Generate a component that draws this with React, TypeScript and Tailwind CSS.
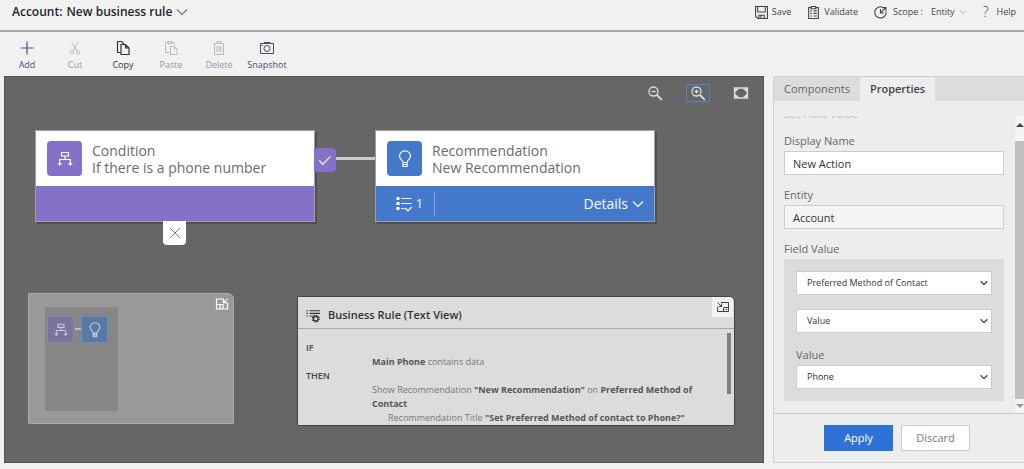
import { useState } from 'react';
import type { ReactNode } from 'react';
import clsx from 'clsx';

/* ---------- icons ---------- */

type IconProps = { className?: string };

function Svg({
  className,
  box = 16,
  stroke = 1,
  children,
}: IconProps & { box?: number; stroke?: number; children: ReactNode }) {
  return (
    <svg
      viewBox={`0 0 ${box} ${box}`}
      fill="none"
      stroke="currentColor"
      strokeWidth={stroke}
      className={clsx('shrink-0', className)}
      aria-hidden="true"
    >
      {children}
    </svg>
  );
}

const ChevronIcon = ({ className }: IconProps) => (
  <Svg className={className} box={12} stroke={1.2}>
    <path d="M1 3.5 6 8.5 11 3.5" />
  </Svg>
);

const SaveIcon = ({ className }: IconProps) => (
  <Svg className={className} box={12}>
    <path d="M.5.5h11v11h-9l-2-2z" />
    <path d="M2.5.5v5h7v-5M3.5 11.5v-3h5v3M5.5 9v2.5" />
  </Svg>
);

const ValidateIcon = ({ className }: IconProps) => (
  <Svg className={className} box={12}>
    <path d="M4 1.5H1.5v10h9v-10H8M4 2.5h4v-2H4z" />
    <path d="M3 4.5h1.5M6 4.5h3M3 6.8h1.5M6 6.8h3M3 9.2h1.5M6 9.2h3" />
  </Svg>
);

const ScopeIcon = ({ className }: IconProps) => (
  <Svg className={className} box={12}>
    <path d="M8 1.2A5.2 5.2 0 1 0 11 5M6 2.8v3.7h3M6.2 6.3l4.500-4.800M8 1.500h3v3" />
  </Svg>
);

const AddIcon = ({ className }: IconProps) => (
  <Svg className={className} stroke={1.2}>
    <path d="M8 1.500v13M1.500 8h13" />
  </Svg>
);

const CutIcon = ({ className }: IconProps) => (
  <Svg className={className}>
    <path d="M4.500 2 10 11M11.500 2 6 11" />
    <circle cx="4.800" cy="12.500" r="1.700" />
    <circle cx="11.200" cy="12.500" r="1.700" />
  </Svg>
);

const CopyIcon = ({ className }: IconProps) => (
  <Svg className={className} stroke={1.2}>
    <path d="M5.500 12.500h-3v-11h4l2.500 2.500" />
    <path d="M6 4.500h4.500l3.500 3.500v6.500H6zM10.500 4.500V8H14" />
  </Svg>
);

const PasteIcon = ({ className }: IconProps) => (
  <Svg className={className}>
    <path d="M6.500 12.500h-4v-10H5M8.500 2.500H11V5M5 3.500h4v-2H5z" />
    <path d="M7.500 6.500h4l2.500 2.500v5.500H7.500zM11.500 6.500V9H14" />
  </Svg>
);

const DeleteIcon = ({ className }: IconProps) => (
  <Svg className={className}>
    <path d="M2.500 3.500h11M6 3.500v-2h4v2M3.500 3.500v11h9v-11M6 6v6M8 6v6M10 6v6" />
  </Svg>
);

const SnapshotIcon = ({ className }: IconProps) => (
  <Svg className={className}>
    <path d="M1.500 3.500h13v10h-13z" />
    <path d="M5 3.500v-1h6v1M2.500 5.500h1.500" />
    <circle cx="8" cy="8.500" r="3" />
  </Svg>
);

const ZoomIcon = ({ className, plus }: IconProps & { plus?: boolean }) => (
  <Svg className={className} stroke={1.3}>
    <circle cx="6.500" cy="6.500" r="4.500" />
    <path d="M4.500 6.500h4" />
    {plus && <path d="M6.500 4.500v4" />}
    <path d="m9.800 9.800 5 5" strokeWidth="1.800" />
  </Svg>
);

const FitIcon = ({ className }: IconProps) => (
  <Svg className={className} stroke={1.3}>
    <path d="M1.500 3h13v10h-13z" />
    <path
      d="M2 3.500h4.500L3.500 6 2 7.500zM14 3.500H9.500L12.500 6 14 7.500zM2 12.500h4.500L3.500 10 2 8.500zM14 12.500H9.500L12.500 10 14 8.500z"
      fill="currentColor"
      stroke="none"
    />
  </Svg>
);

const ConditionIcon = ({ className }: IconProps) => (
  <Svg className={className} stroke={1.2}>
    <path d="M4.500 1.500h7v3.500h-7zM8 5v3.500M2.700 13V8.500h10.600V13" />
    <path d="M.2 12h5l-2.500 3zM10.800 12h5l-2.500 3z" fill="currentColor" stroke="none" />
  </Svg>
);

const BulbIcon = ({ className }: IconProps) => (
  <Svg className={className} box={18} stroke={1.2}>
    <path d="M7 12.500c0-2-3.500-3.500-3.500-6.500a5.500 5.200 0 0 1 11 0c0 3-3.500 4.500-3.500 6.500zM7 12.500v4h4v-4M7 14.500h4" />
  </Svg>
);

const ChecklistIcon = ({ className }: IconProps) => (
  <Svg className={className} stroke={1.2}>
    <path d="M5 2.500H15.500M5 7.500H15.500M5 12.500H8.500" />
    <path d="M.5 1h3v3h-3zM.5 6h3v3h-3zM.5 11h3v3h-3z" fill="currentColor" stroke="none" />
    <path d="m9 12 3 2.800 3.800-4" />
  </Svg>
);

const CheckIcon = ({ className }: IconProps) => (
  <Svg className={className} stroke={1.3}>
    <path d="m1.500 8.500 4 4.500 9-9.500" />
  </Svg>
);

const CloseIcon = ({ className }: IconProps) => (
  <Svg className={className} box={12}>
    <path d="m1 1 10 10M11 1 1 11" />
  </Svg>
);

const CollapseIcon = ({ className }: IconProps) => (
  <Svg className={className} box={14} stroke={1.2}>
    <path d="M9 2H1.500v10h11V5.500M1.500 7.500H8V12M5 7.500V12" />
    <path d="m12.500 2-4 3.500M8.500 2.500v3.200H12" />
  </Svg>
);

const PopOutIcon = ({ className }: IconProps) => (
  <Svg className={className} box={14}>
    <path d="M5 2.500h7.500v9h-11V7M7.500 11.500v-4h5M9.500 9.500h1.500" />
    <path d="m1.500 2.500 4 4M5.500 3.500v3h-3" />
  </Svg>
);

const RuleTextIcon = ({ className }: IconProps) => (
  <Svg className={className} stroke={1.3}>
    <path d="M4 2h12M4 5h12M4 8h4M.5 2H2.200M.5 5H2.200M.5 8H2.200" />
    <circle cx="11.200" cy="11" r="2.700" strokeWidth="1.600" />
    <circle cx="11.200" cy="11" r="4" strokeDasharray="1.500 1.640" />
  </Svg>
);

/* ---------- header and toolbar ---------- */

function Header() {
  return (
    <header className="flex h-8 items-center justify-between border-b-2 border-[#a6a6a6] pb-1.5 pl-3 pr-2">
      <button type="button" className="flex items-center gap-1 text-xs font-semibold text-[#262626]">
        <span>Account:</span>
        <span>New business rule</span>
        <ChevronIcon className="size-3 text-[#777]" />
      </button>
      <nav className="flex items-center gap-4 text-[9px] text-[#444]">
        <button type="button" className="flex items-center gap-1">
          <SaveIcon className="size-[13px]" />
          Save
        </button>
        <button type="button" className="flex items-center gap-1">
          <ValidateIcon className="size-[13px]" />
          Validate
        </button>
        <button type="button" className="flex items-center">
          <ScopeIcon className="size-[13px]" />
          <span className="ml-1.5">Scope :</span>
          <span className="ml-2">Entity</span>
          <ChevronIcon className="ml-1 size-2 text-[#999]" />
        </button>
        <button type="button" className="flex items-center gap-2">
          <span className="text-sm font-light leading-4">?</span>
          Help
        </button>
      </nav>
    </header>
  );
}

const TOOLS = [
  { label: 'Add', Icon: AddIcon, tone: 'text-[#44527a]' },
  { label: 'Cut', Icon: CutIcon, tone: 'text-[#8e97a8]', disabled: true },
  { label: 'Copy', Icon: CopyIcon, tone: 'text-[#333]' },
  { label: 'Paste', Icon: PasteIcon, tone: 'text-[#8e97a8]', disabled: true },
  { label: 'Delete', Icon: DeleteIcon, tone: 'text-[#8e97a8]', disabled: true },
  { label: 'Snapshot', Icon: SnapshotIcon, tone: 'text-[#47506a]' },
];

function Toolbar() {
  return (
    <div className="flex h-11 px-[3px] pt-2">
      {TOOLS.map(({ label, Icon, tone, disabled }) => (
        <button
          key={label}
          type="button"
          disabled={disabled}
          className={clsx('flex w-12 flex-col items-center gap-[3px] text-[9px] leading-3', tone)}
        >
          <Icon className={clsx('size-4', disabled && 'text-[#bbb]')} />
          {label}
        </button>
      ))}
    </div>
  );
}

/* ---------- canvas ---------- */

type NodeCardProps = {
  icon: ReactNode;
  kind: string;
  name: string;
  color: string;
  className?: string;
  children?: ReactNode;
};

function NodeCard({ icon, kind, name, color, className, children }: NodeCardProps) {
  return (
    <article
      className={clsx(
        'absolute w-[280px] border border-[#a0a0a0] shadow-[2px_2px_0_#505050]',
        className,
      )}
    >
      <div className="flex h-[55px] items-center gap-2.5 bg-white px-[11px]">
        <span className={clsx('grid size-[35px] place-items-center rounded text-white', color)}>{icon}</span>
        <div className="text-sm leading-[17px] text-[#6b6b6b]">
          <h2>{kind}</h2>
          <p>{name}</p>
        </div>
      </div>
      <div className={clsx('flex h-[35px] items-center text-white', color)}>{children}</div>
    </article>
  );
}

function CanvasTools() {
  return (
    <div className="flex justify-end gap-[19px] px-2.5 pt-[7px] text-[#ddd]">
      <button type="button" aria-label="Zoom out" className="grid h-[18px] w-6 place-items-center">
        <ZoomIcon className="size-4" />
      </button>
      <button
        type="button"
        aria-label="Zoom in"
        className="grid h-[18px] w-6 place-items-center border border-[#4a86c8]"
      >
        <ZoomIcon className="size-4" plus />
      </button>
      <button type="button" aria-label="Fit to canvas" className="grid h-[18px] w-6 place-items-center">
        <FitIcon className="size-4" />
      </button>
    </div>
  );
}

function MiniMap() {
  return (
    <aside
      aria-label="Mini map"
      className="absolute left-[23px] top-[216px] flex h-[131px] w-[206px] items-start justify-between rounded-tr-md border border-[#ababab] bg-[#999] pl-4 pr-1 pt-[3px]"
    >
      <div className="mt-2.5 flex h-[104px] w-[73px] items-start bg-[#868686] pl-0.5 pt-[9px]">
        <span className="grid size-[27px] place-items-center border border-[#8f86ab] bg-[#7c72a0] text-[#c9c5d6]">
          <ConditionIcon className="size-[14px]" />
        </span>
        <span className="mt-3 h-0.5 w-[7px] border-l border-[#868686] bg-[#bbb]" />
        <span className="grid size-[27px] place-items-center border border-[#6f8db5] bg-[#5878a5] text-[#c9d3e0]">
          <BulbIcon className="size-4" />
        </span>
      </div>
      <button type="button" aria-label="Collapse mini map" className="text-white">
        <CollapseIcon className="size-[14px]" />
      </button>
    </aside>
  );
}

function TextView() {
  return (
    <section className="absolute left-[292px] top-[219px] flex h-[130px] w-[438px] flex-col overflow-hidden rounded-tr-md border border-[#444] bg-[#dcdcdc]">
      <header className="flex h-8 shrink-0 items-start justify-between border-b border-[#aaa] pl-2 pr-px">
        <div className="flex h-full items-center gap-2 pt-1.5 text-[#333]">
          <RuleTextIcon className="size-[14px]" />
          <h2 className="text-[11px] font-semibold">Business Rule (Text View)</h2>
        </div>
        <button
          type="button"
          aria-label="Collapse text view"
          className="grid h-5 w-[21px] place-items-center bg-[#f2f2f2] text-[#444]"
        >
          <PopOutIcon className="size-[14px]" />
        </button>
      </header>
      <div className="flex min-h-0 flex-1 justify-between pl-2 pr-[3px] pt-1">
        <div className="min-w-0 flex-1 pt-2 text-[9px] leading-[14px] text-[#777]">
          <p className="font-semibold text-[#444]">IF</p>
          <p className="pl-[66px]">
            <b className="font-bold text-[#555]">Main Phone</b> contains data
          </p>
          <p className="font-semibold text-[#444]">THEN</p>
          <p className="pl-[66px]">
            Show Recommendation <b className="font-bold text-[#555]">"New Recommendation"</b> on{' '}
            <b className="font-bold text-[#555]">
              Preferred Method of
              <br />
              Contact
            </b>
          </p>
          <p className="pl-[82px]">
            Recommendation Title{' '}
            <b className="font-bold text-[#555]">"Set Preferred Method of contact to Phone?"</b>
          </p>
        </div>
        <span className="h-[61px] w-1 bg-[#808080]" />
      </div>
    </section>
  );
}

function Canvas() {
  return (
    <main className="relative min-w-0 flex-1 border border-[#555] bg-[#666]">
      <CanvasTools />

      {/* connector and branch handles sit on the edges of the condition node */}
      <span className="absolute left-[330px] top-20 h-[3px] w-10 bg-[#ccc]" />
      <NodeCard
        className="left-[30px] top-[53px]"
        color="bg-[#8571c8]"
        icon={<ConditionIcon className="size-4" />}
        kind="Condition"
        name="If there is a phone number"
      />
      <span className="absolute left-[309px] top-[71px] grid h-6 w-[22px] place-items-center rounded-r bg-[#8571c8] text-white">
        <CheckIcon className="size-[14px]" />
      </span>
      <span className="absolute left-[158px] top-36 grid h-6 w-[23px] place-items-center rounded-b bg-white text-[#8571c8]">
        <CloseIcon className="size-3" />
      </span>

      <NodeCard
        className="left-[370px] top-[53px]"
        color="bg-[#4478cb]"
        icon={<BulbIcon className="size-[18px]" />}
        kind="Recommendation"
        name="New Recommendation"
      >
        <div className="flex h-6 items-center gap-1 border-r border-[#7fa3de] pl-5 pr-[11px] text-xs">
          <ChecklistIcon className="size-4" />1
        </div>
        <button type="button" className="ml-auto flex items-center gap-1 pr-2.5 text-sm">
          Details
          <ChevronIcon className="size-3" />
        </button>
      </NodeCard>

      <MiniMap />
      <TextView />
    </main>
  );
}

/* ---------- properties panel ---------- */

function TextField({ id, label, value, readOnly }: { id: string; label: string; value: string; readOnly?: boolean }) {
  return (
    <div className="mb-3 flex flex-col">
      <label htmlFor={id} className="mb-0.5 text-[11px] leading-4 text-[#666]">
        {label}
      </label>
      <input
        id={id}
        defaultValue={value}
        readOnly={readOnly}
        className={clsx(
          'h-6 w-full border border-[#ccc] px-2 text-[11px] text-[#333]',
          readOnly ? 'bg-[#f4f4f4]' : 'bg-white',
        )}
      />
    </div>
  );
}

function SelectField({ id, label, value, hideLabel }: { id: string; label: string; value: string; hideLabel?: boolean }) {
  return (
    <div className="flex flex-col">
      {!hideLabel && (
        <label htmlFor={id} className="mb-0.5 text-[11px] leading-4 text-[#666]">
          {label}
        </label>
      )}
      <div className="relative">
        <select
          id={id}
          aria-label={hideLabel ? label : undefined}
          defaultValue={value}
          className="block h-6 w-full appearance-none border border-[#ccc] bg-white px-2.5 text-[9px] text-[#333]"
        >
          <option>{value}</option>
        </select>
        <ChevronIcon className="pointer-events-none absolute right-1 top-2 size-2 stroke-2 text-[#444]" />
      </div>
    </div>
  );
}

function ScrollBar() {
  return (
    <div className="flex w-[9px] flex-col items-center overflow-hidden bg-[#f4f4f4]">
      <span className="grid h-[25px] place-items-center pb-2">
        <span className="border-x-4 border-b-4 border-x-transparent border-b-[#444]" />
      </span>
      <span className="w-full flex-1 bg-[#c1c1c1]" />
      <span className="grid h-[14px] place-items-center">
        <span className="border-x-4 border-t-4 border-x-transparent border-t-[#999]" />
      </span>
    </div>
  );
}

const TABS = ['Components', 'Properties'];

function PropertiesPanel() {
  const [active, setActive] = useState('Properties');

  return (
    <aside className="flex w-[251px] shrink-0 flex-col border-b border-l border-t border-[#d0d0d0] bg-[#ededed]">
      <div role="tablist" className="flex h-6 bg-[#dcdcdc]">
        {TABS.map((tab) => (
          <button
            key={tab}
            type="button"
            role="tab"
            aria-selected={tab === active}
            onClick={() => setActive(tab)}
            className={clsx(
              'px-2.5 text-[11px]',
              tab === active ? 'bg-[#ededed] font-semibold text-[#444]' : 'text-[#666]',
            )}
          >
            {tab}
          </button>
        ))}
      </div>

      <div className="flex flex-1 justify-between border-b border-[#c8c8c8] pl-2.5 pt-[15px]">
        <div className="w-[220px]">
          {/* section heading, scrolled almost out of view */}
          <div className="flex h-1.5 items-end overflow-hidden">
            <h3 className="text-[11px] leading-4 text-[#bbb]">Set Field Value</h3>
          </div>
          <div className="pt-[11px]">
            <TextField id="display-name" label="Display Name" value="New Action" />
            <TextField id="entity" label="Entity" value="Account" readOnly />
            <fieldset>
              <legend className="mb-0.5 text-[11px] leading-4 text-[#666]">Field Value</legend>
              <div className="flex flex-col gap-3.5 bg-[#dcdcdc] p-3">
                <SelectField id="target" label="Field" value="Preferred Method of Contact" hideLabel />
                <SelectField id="type" label="Type" value="Value" hideLabel />
                <SelectField id="value" label="Value" value="Phone" />
              </div>
            </fieldset>
          </div>
        </div>
        <ScrollBar />
      </div>

      <div className="flex h-12 items-center justify-center gap-2 pr-1 text-[11px]">
        <button type="button" className="h-[26px] w-[69px] bg-[#2f72d6] text-white">
          Apply
        </button>
        <button type="button" className="h-[26px] w-[69px] border border-[#ccc] bg-white text-[#777]">
          Discard
        </button>
      </div>
    </aside>
  );
}

export default function App() {
  return (
    <div className="flex min-h-screen flex-col bg-[#f1f1f1] font-['Open_Sans','Noto_Sans',sans-serif]">
      <Header />
      <Toolbar />
      <div className="flex flex-1 gap-[9px] pb-1.5 pl-1">
        <Canvas />
        <PropertiesPanel />
      </div>
    </div>
  );
}
